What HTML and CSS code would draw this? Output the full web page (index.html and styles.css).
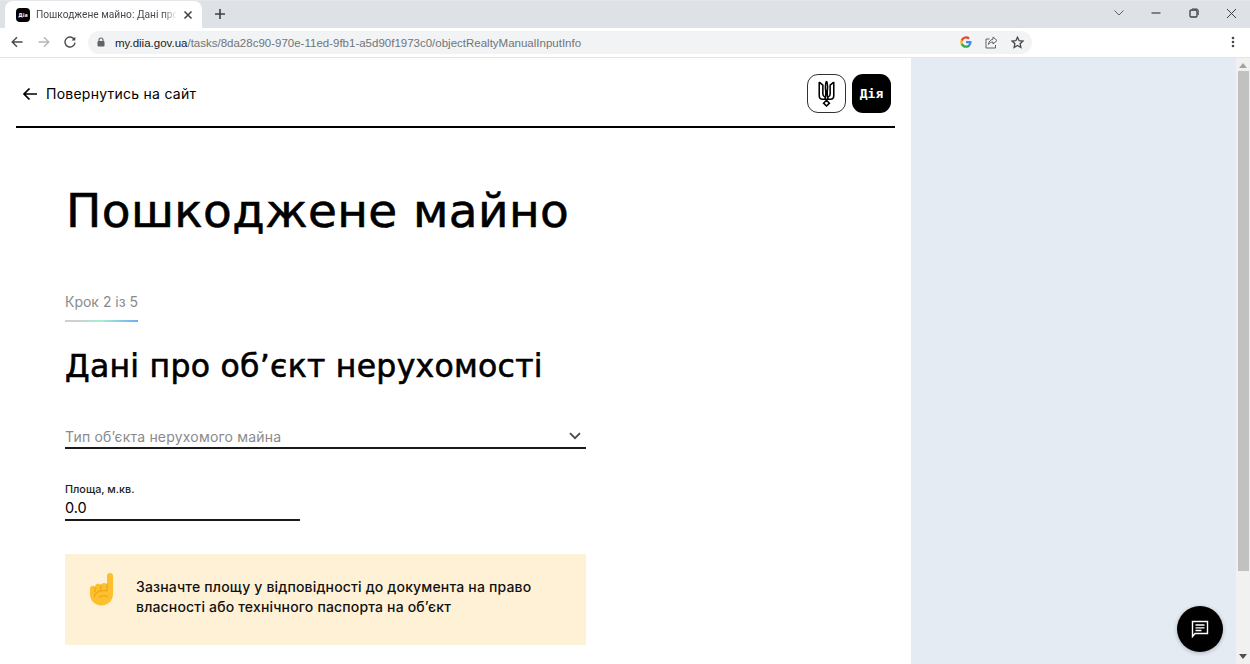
FILE: index.html
```html
<!DOCTYPE html>
<html lang="uk">
<head>
<meta charset="utf-8">
<title>Пошкоджене майно</title>
<link rel="stylesheet" href="styles.css">
</head>
<body>
<div class="browser">
  <div class="tabstrip">
    <div class="tab">
      <span class="favicon">Дія</span>
      <span class="tab-title">Пошкоджене майно: Дані про о</span>
      <svg class="tab-close" width="10" height="10" viewBox="0 0 10 10"><path d="M1.500 1.500l7 7M8.500 1.500l-7 7" stroke="#3c4043" stroke-width="1.500" fill="none"/></svg>
    </div>
    <svg class="new-tab" width="12" height="12" viewBox="0 0 12 12"><path d="M6 1v10M1 6h10" stroke="#3c4043" stroke-width="1.600" fill="none"/></svg>
    <div class="window-controls">
      <svg width="12" height="8" viewBox="0 0 12 8"><path d="M1.500 1.500L6 6l4.500-4.500" stroke="#5f6368" stroke-width="1" fill="none"/></svg>
      <svg width="10" height="10" viewBox="0 0 10 10"><path d="M0.500 5h9" stroke="#3c4043" stroke-width="1.200" fill="none"/></svg>
      <svg width="10" height="10" viewBox="0 0 10 10"><rect x="1" y="2" width="7" height="7" rx="1.200" stroke="#3c4043" stroke-width="1.300" fill="none"/><path d="M3 1h5a1.500 1.500 0 0 1 1.200 1.200V7" stroke="#3c4043" stroke-width="1" fill="none"/></svg>
      <svg width="11" height="11" viewBox="0 0 11 11"><path d="M1 1l9 9M10 1l-9 9" stroke="#3c4043" stroke-width="1" fill="none"/></svg>
    </div>
  </div>
  <div class="toolbar">
    <div class="nav-buttons">
      <svg width="12" height="12" viewBox="0 0 12 12"><path d="M11.500 6H1.500M6 1.200L1.200 6 6 10.800" stroke="#45494d" stroke-width="1.400" fill="none"/></svg>
      <svg width="12" height="12" viewBox="0 0 12 12"><path d="M.5 6h10M6 1.200L10.800 6 6 10.800" stroke="#b4b6b9" stroke-width="1.400" fill="none"/></svg>
      <svg width="12" height="12" viewBox="0 0 12 12"><path d="M10.400 3.600A5 5 0 1 0 11 6.600" stroke="#45494d" stroke-width="1.400" fill="none"/><path d="M11.300 .8v3.800H7.500z" fill="#45494d"/></svg>
    </div>
    <div class="omnibox">
      <svg class="lock" width="8" height="10" viewBox="0 0 8 10"><path d="M2 4V3a2 2 0 0 1 4 0v1" stroke="#5f6368" stroke-width="1.100" fill="none"/><rect x=".5" y="4" width="7" height="5.500" rx="1" fill="#5f6368"/></svg>
      <span class="url"><span class="url-host">my.diia.gov.ua</span>/tasks/8da28c90-970e-11ed-9fb1-a5d90f1973c0/objectRealtyManualInputInfo</span>
      <span class="omni-icons">
        <svg width="12" height="12" viewBox="0 0 12 12"><path d="M11.500 6.100c0-.4 0-.8-.1-1.100H6v2.200h3.100a2.700 2.700 0 0 1-1.200 1.700v1.400h1.900c1.100-1 1.700-2.500 1.700-4.200z" fill="#4285f4"/><path d="M6 11.800c1.600 0 2.900-.5 3.800-1.400L7.900 8.900c-.5.4-1.200.6-1.900.6a3.400 3.400 0 0 1-3.200-2.300H.9v1.500A5.800 5.800 0 0 0 6 11.800z" fill="#34a853"/><path d="M2.800 7.200a3.400 3.400 0 0 1 0-2.300V3.400H.9a5.800 5.800 0 0 0 0 5.300z" fill="#fbbc05"/><path d="M6 2.500c.9 0 1.600.3 2.200.9l1.600-1.600A5.800 5.800 0 0 0 .9 3.400l1.900 1.500A3.400 3.400 0 0 1 6 2.500z" fill="#ea4335"/></svg>
        <svg width="13" height="13" viewBox="0 0 13 13"><path d="M4.500 3H1v9h9.500V9" stroke="#5f6368" stroke-width="1" fill="none"/><path d="M8 1l4 3.500L8 8V6C6 6 4.400 6.800 3.500 8.500 3.700 5.800 5.500 3.500 8 3.200z" stroke="#5f6368" stroke-width="1" fill="none"/></svg>
        <svg width="13" height="13" viewBox="0 0 13 13"><path d="M6.500 1.200l1.600 3.500 3.800.4-2.800 2.600.8 3.800-3.400-2-3.400 2 .8-3.800L1.100 5.100l3.800-.4z" stroke="#45494d" stroke-width="1.300" fill="none"/></svg>
      </span>
    </div>
    <svg class="menu-dots" width="4" height="12" viewBox="0 0 4 12"><circle cx="2" cy="2" r="1.300" fill="#45494d"/><circle cx="2" cy="6" r="1.300" fill="#45494d"/><circle cx="2" cy="10" r="1.300" fill="#45494d"/></svg>
  </div>
  <div class="viewport">
    <main class="main">
      <header class="site-header">
        <a class="back-link">
          <svg width="16" height="14" viewBox="0 0 16 14"><path d="M15 7H2M7.500 1.500L2 7l5.500 5.500" stroke="#000" stroke-width="1.700" fill="none"/></svg>
          <span>Повернутись на сайт</span>
        </a>
        <div class="logos">
          <span class="logo logo-outline">
            <svg width="17" height="27" viewBox="0 0 16 26"><path d="M8 1C6.500 4 6.800 7 7.200 10c.3 2.500.2 5-.6 8M8 1c1.500 3 1.200 6 .8 9-.3 2.500-.2 5 .6 8M1 2v13c0 2.500 1 3.500 3 3.500h8c2 0 3-1 3-3.500V2M1 2l3.500 3v8.500c0 1.500.6 2.500 2 3M15 2l-3.500 3v8.500c0 1.500-.6 2.500-2 3M8 19.500l-2.800 2.800L8 25l2.800-2.700z" fill="none" stroke="#000" stroke-width="1.500"/></svg>
          </span>
          <span class="logo logo-solid">Дія</span>
        </div>
      </header>
      <section class="content">
        <h1 class="page-title">Пошкоджене майно</h1>
        <div class="step">Крок 2 із 5</div>
        <h2 class="section-title">Дані про об’єкт нерухомості</h2>
        <div class="select-field">
          <span>Тип об’єкта нерухомого майна</span>
          <svg width="12" height="8" viewBox="0 0 12 8"><path d="M1 1.200l5 5 5-5" stroke="#45494d" stroke-width="1.800" fill="none"/></svg>
        </div>
        <div class="input-field">
          <label class="input-label">Площа, м.кв.</label>
          <div class="input-value">0.0</div>
        </div>
        <div class="notice">
          <svg class="notice-icon" width="24" height="33" viewBox="0 0 24 33"><path d="M17 3a3 3 0 0 1 6 0v18c0 6.500-5 11.500-11.500 11.500S0 27.500 0 21v-5.500c0-1.500 1.200-2.700 2.700-2.700.9 0 1.800.4 2.300 1.200.1-2 1.300-3.200 3-3.200 1.200 0 2.300.6 2.800 1.700.4-1.500 1.500-2.500 3-2.500 1.200 0 2.200.5 3.200 1.500z" fill="#fcc02e"/><path d="M5 14v5.500M10.800 11.500v6.500M17 10.500V18c-3.500-.8-7-.4-10 1.500-1.800 1.200-2.500 2.700-2.500 4.500M9 24c3-1.500 6-1.500 9-.5" stroke="#e8a013" stroke-width="1" fill="none"/></svg>
          <p class="notice-text">Зазначте площу у відповідності до документа на право власності або технічного паспорта на об’єкт</p>
        </div>
      </section>
    </main>
    <aside class="side-panel">
      <button class="chat-button">
        <svg width="18" height="18" viewBox="0 0 18 18"><path d="M1.500 1.500h15v12H4L1.500 16.500z" stroke="#fff" stroke-width="1.400" fill="none"/><path d="M4.500 5h9M4.500 7.800h9M4.500 10.500h6" stroke="#fff" stroke-width="1.300" fill="none"/></svg>
      </button>
    </aside>
    <div class="scrollbar">
      <svg width="8" height="5" viewBox="0 0 8 5"><path d="M4 0l4 5H0z" fill="#a3a3a3"/></svg>
      <div class="scroll-thumb"></div>
      <svg width="8" height="5" viewBox="0 0 8 5"><path d="M0 0h8L4 5z" fill="#505050"/></svg>
    </div>
  </div>
</div>
</body>
</html>
```
FILE: styles.css
```css
* { box-sizing: border-box; }
html, body { margin: 0; height: 100%; overflow: hidden; }
body { font-family: "Inter", "Noto Sans", sans-serif; color: #000; background: #fff; }
.browser { display: flex; flex-direction: column; height: 664px; width: 1250px; }

.tabstrip { height: 28px; background: #dee1e6; display: flex; align-items: flex-end; position: relative; border-top: 1px solid #e4e6ea; }
.tab { width: 197px; height: 27px; margin-left: 5px; padding: 0 9px 0 11px; background: #fff; border-radius: 8px 8px 0 0; display: flex; align-items: center; gap: 6px; }
.favicon { width: 14px; height: 14px; flex: none; border-radius: 4px; background: #000; color: #fff; font: 700 5px/14px "DejaVu Sans", sans-serif; text-align: center; }
.tab-title { flex: 1; min-width: 0; white-space: nowrap; font: 10.200px/16px "Roboto", sans-serif; color: #45494d; -webkit-mask-image: linear-gradient(90deg, #000 90%, transparent 100%); mask-image: linear-gradient(90deg, #000 90%, transparent 100%); }
.tab-close { flex: none; }
.new-tab { margin: 0 0 8px 12px; }
.window-controls { margin-left: auto; height: 27px; width: 150px; display: grid; grid-template-columns: repeat(4, 1fr); align-items: center; justify-items: center; padding: 0 0 3px 0; }

.toolbar { height: 30px; background: #fff; display: flex; align-items: center; border-bottom: 1px solid #e3e4e6; padding: 0 12px 1px 11px; }
.nav-buttons { display: flex; gap: 14.500px; align-items: center; width: 77px; }
.omnibox { width: 944px; height: 23px; border-radius: 12px; background: #f1f3f4; display: flex; align-items: center; padding: 0 8px 0 9px; }
.lock { flex: none; margin-right: 10px; }
.url { flex: 1; padding-top: 1px; font: 11.500px/16px "Liberation Sans", sans-serif; color: #70757a; white-space: nowrap; }
.url-host { color: #202124; }
.omni-icons { display: flex; align-items: center; gap: 13px; }
.menu-dots { margin-left: auto; margin-right: 3px; }

.viewport { flex: 1; display: flex; min-height: 0; }
.main { width: 911px; flex: none; padding: 0 16px; background: #fff; overflow: hidden; }
.site-header { height: 70px; display: flex; align-items: center; justify-content: space-between; border-bottom: 2px solid #000; padding: 3px 4px 0 6px; }
.back-link { display: flex; align-items: center; gap: 8px; font-size: 14px; letter-spacing: .25px; }
.logos { display: flex; gap: 6px; }
.logo { width: 39px; height: 39px; border-radius: 11px; display: flex; align-items: center; justify-content: center; }
.logo-outline { border: 1px solid #333; background: #fff; }
.logo-solid { background: #000; color: #fff; font: 700 13px "DejaVu Sans Mono", monospace; }

.content { padding: 53px 0 0 49px; width: 570px; }
.page-title { margin: 0; padding-left: 1px; font-family: "DejaVu Sans", sans-serif; font-size: 47px; line-height: 60px; font-weight: 400; letter-spacing: .4px; -webkit-text-stroke: .6px #000; white-space: nowrap; }
.step { display: inline-block; margin-top: 52px; padding-bottom: 9px; font-size: 14px; line-height: 18px; color: #8a8a8a; border-bottom: 2px solid; border-image: linear-gradient(90deg, #d9c8cc, #a8ecd4 50%, #6ea8f5) 1; }
.section-title { margin: 21px 0 0; font-family: "DejaVu Sans", sans-serif; font-size: 31.500px; line-height: 46px; font-weight: 400; letter-spacing: .27px; -webkit-text-stroke: .6px #000; white-space: nowrap; }

.select-field { margin-top: 30px; height: 30px; width: 521px; display: flex; align-items: center; justify-content: space-between; border-bottom: 2px solid #1a1a1a; color: #8a8a8a; font-size: 14px; letter-spacing: .2px; padding: 6px 5px 0 0; }
.input-field { margin-top: 34px; width: 235px; }
.input-label { display: block; font-size: 10.800px; line-height: 14px; font-weight: 500; color: #222; }
.input-value { height: 24px; padding-top: 2px; font-size: 14.500px; line-height: 18px; border-bottom: 2px solid #1a1a1a; }

.notice { margin-top: 33px; width: 521px; height: 91px; background: #fff1d6; display: flex; padding: 19px 24px 0 25px; align-items: flex-start; }
.notice-icon { flex: none; margin-right: 22px; }
.notice-text { margin: 4px 0 0; font-size: 14px; line-height: 20px; font-weight: 500; letter-spacing: .17px; color: #111; }

.side-panel { flex: 1; background: #e4ebf3; position: relative; }
.chat-button { position: absolute; right: 13px; bottom: 12px; width: 46px; height: 46px; border: 0; border-radius: 50%; background: #000; display: flex; align-items: center; justify-content: center; box-shadow: 0 1px 4px rgba(0,0,0,.25); padding: 0; }
.scrollbar { width: 14px; flex: none; background: #f1f1f1; display: flex; flex-direction: column; align-items: center; padding: 5px 0 5px; }
.scroll-thumb { width: 11px; height: 500px; background: #c1c1c1; margin: 3px 0 auto; }
```
